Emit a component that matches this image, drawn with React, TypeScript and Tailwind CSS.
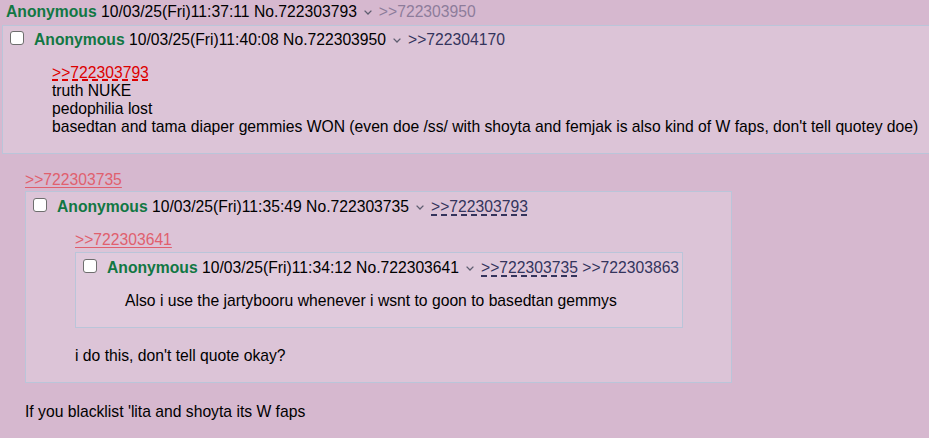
import React from "react";

function Check() {
  return (
    <span className="ml-[7px] mr-[10px] inline-block h-[14px] w-[14px] shrink-0 self-start rounded-[3px] border border-[#6e6e6e] bg-white" />
  );
}

function Chevron() {
  return (
    <svg
      width="8"
      height="5"
      viewBox="0 0 8 5"
      className="mx-[7px] inline-block align-middle"
      fill="none"
      stroke="#5e5e70"
      strokeWidth="1.3"
    >
      <polyline points="0.6,0.6 4,4 7.4,0.6" />
    </svg>
  );
}

type Link = { text: string; kind: "dim" | "plain" | "dashed" };

function LinkEl({ l }: { l: Link }) {
  if (l.kind === "dim") return <span className="text-[#34345c] opacity-45">{l.text}</span>;
  if (l.kind === "dashed")
    return (
      <span className="text-[#34345c] underline decoration-dashed decoration-[#34345c] decoration-[1.5px] underline-offset-[2px]">
        {l.text}
      </span>
    );
  return <span className="text-[#34345c]">{l.text}</span>;
}

function Header({
  date,
  no,
  links,
  check = true,
}: {
  date: string;
  no: string;
  links: Link[];
  check?: boolean;
}) {
  return (
    <div className="flex h-[18px] items-start whitespace-nowrap pr-[3px]">
      {check && <Check />}
      <span>
        <b className="font-bold text-[#117743]">Anonymous</b> {date} No.{no}
        <Chevron />
        {links.map((l, i) => (
          <React.Fragment key={i}>
            {i > 0 && " "}
            <LinkEl l={l} />
          </React.Fragment>
        ))}
      </span>
    </div>
  );
}

function FadeLink({ text }: { text: string }) {
  return <span className="text-[#e0606e] underline decoration-[#e0606e] underline-offset-[2px]">{text}</span>;
}

export default function App() {
  return (
    <div className="h-screen w-full overflow-hidden bg-[#d6b8cf] font-['Liberation_Sans',Arial,sans-serif] text-[15.7px] leading-[18px] text-black">
      <div className="pl-[6px] pt-[3px]">
        <Header
          check={false}
          date="10/03/25(Fri)11:37:11"
          no="722303793"
          links={[{ text: ">>722303950", kind: "dim" }]}
        />
      </div>

      {/* expanded backlink reply */}
      <div className="ml-[2px] mt-[4px] w-fit border border-r-0 border-[#bac5d9] bg-[#dcc4d7] pt-[5px] pb-[2px]">
        <Header
          date="10/03/25(Fri)11:40:08"
          no="722303950"
          links={[{ text: ">>722304170", kind: "plain" }]}
        />
        <div className="my-[15px] ml-[49px] mr-[48px] whitespace-nowrap">
          <span className="text-[#dd0000] underline decoration-dashed decoration-[#dd0000] decoration-2 underline-offset-[1px]">
            &gt;&gt;722303793
          </span>
          <br />
          truth NUKE
          <br />
          pedophilia lost
          <br />
          basedtan and tama diaper gemmies WON (even doe /ss/ with shoyta and femjak is also kind of W faps, don't tell quotey doe)
        </div>
      </div>

      {/* main post body */}
      <div className="ml-[25px] mt-[17px]">
        <div>
          <FadeLink text=">>722303735" />
        </div>

        <div className="mt-[2px] w-fit border border-[#bac5d9] bg-[#dcc4d7] pt-[6px] pb-[2px]">
          <Header
            date="10/03/25(Fri)11:35:49"
            no="722303735"
            links={[{ text: ">>722303793", kind: "dashed" }]}
          />
          <div className="mt-[15px] mb-[15px] ml-[49px] mr-[48px]">
            <div>
              <FadeLink text=">>722303641" />
            </div>
            <div className="mt-[3px] w-fit border border-[#bac5d9] bg-[#e0cadc] pt-[6px] pb-[2px]">
              <Header
                date="10/03/25(Fri)11:34:12"
                no="722303641"
                links={[
                  { text: ">>722303735", kind: "dashed" },
                  { text: ">>722303863", kind: "plain" },
                ]}
              />
              <div className="my-[15px] ml-[49px] mr-[48px] whitespace-nowrap">
                Also i use the jartybooru whenever i wsnt to goon to basedtan gemmys
              </div>
            </div>
            <div className="mt-[19px]">i do this, don't tell quote okay?</div>
          </div>
        </div>

        <div className="mt-[20px]">If you blacklist 'lita and shoyta its W faps</div>
      </div>
    </div>
  );
}
